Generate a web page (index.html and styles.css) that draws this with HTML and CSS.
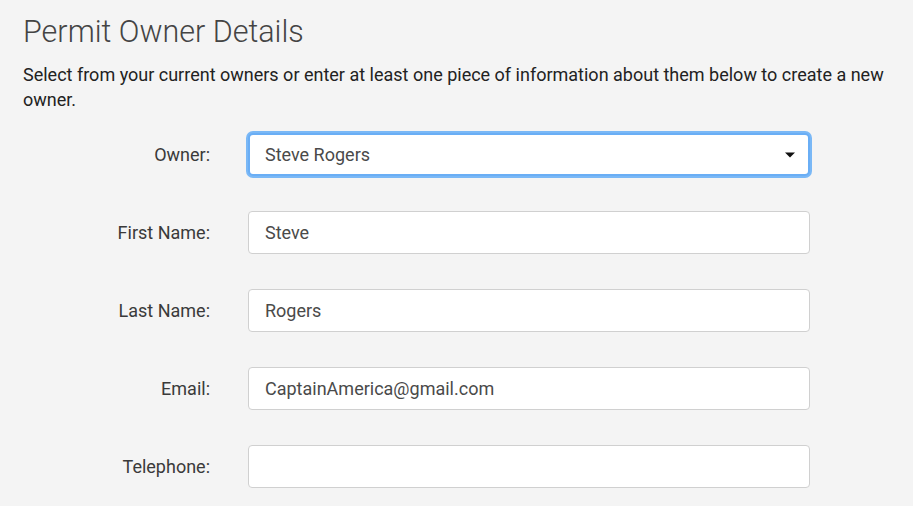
FILE: index.html
```html
<!DOCTYPE html>
<html>
<head>
<meta charset="utf-8">
<link rel="stylesheet" href="styles.css">
</head>
<body>
<div class="page">
  <h1 class="title">Permit Owner Details</h1>
  <p class="intro">Select from your current owners or enter at least one piece of information about them below to create a new owner.</p>
  <form class="form">
    <div class="row">
      <label class="label">Owner:</label>
      <div class="select focused">
        <span class="value">Steve Rogers</span>
        <svg class="caret" width="10" height="6" viewBox="0 0 10 6"><path d="M0 0.5h10L5 5.5z" fill="#111"/></svg>
      </div>
    </div>
    <div class="row">
      <label class="label">First Name:</label>
      <div class="input"><span class="value">Steve</span></div>
    </div>
    <div class="row">
      <label class="label">Last Name:</label>
      <div class="input"><span class="value">Rogers</span></div>
    </div>
    <div class="row">
      <label class="label">Email:</label>
      <div class="input"><span class="value">CaptainAmerica@gmail.com</span></div>
    </div>
    <div class="row">
      <label class="label">Telephone:</label>
      <div class="input"><span class="value"></span></div>
    </div>
  </form>
</div>
</body>
</html>
```
FILE: styles.css
```css
html, body {
  margin: 0;
  padding: 0;
  background: #f4f4f4;
}
body {
  font-family: Roboto, "Liberation Sans", sans-serif;
  color: #333;
}
.page {
  padding: 13px 0 0 23px;
  width: 870px;
}
.title {
  margin: 0;
  font-weight: 300;
  font-size: 30.5px;
  line-height: 38px;
  color: #444;
}
.intro {
  margin: 11px 0 0 0;
  font-size: 18px;
  line-height: 25px;
  color: #222;
}
.form {
  margin-top: 21px;
  display: flex;
  flex-direction: column;
  gap: 35px;
}
.row {
  display: flex;
  align-items: center;
  gap: 38px;
}
.label {
  width: 187px;
  text-align: right;
  font-size: 18px;
  color: #3a3a3a;
}
.input, .select {
  box-sizing: border-box;
  width: 562px;
  height: 43px;
  background: #fff;
  border: 1px solid #d0d0d0;
  border-radius: 4px;
  display: flex;
  align-items: center;
  padding: 0 16px;
  font-size: 18px;
  color: #4a4a4a;
}
.select.focused {
  border: 2px solid #6aaef5;
  box-shadow: 0 0 0 2px #7ab8f6;
  border-radius: 5px;
  justify-content: space-between;
  padding: 0 13px 0 15px;
}
.caret {
  display: block;
}
```
